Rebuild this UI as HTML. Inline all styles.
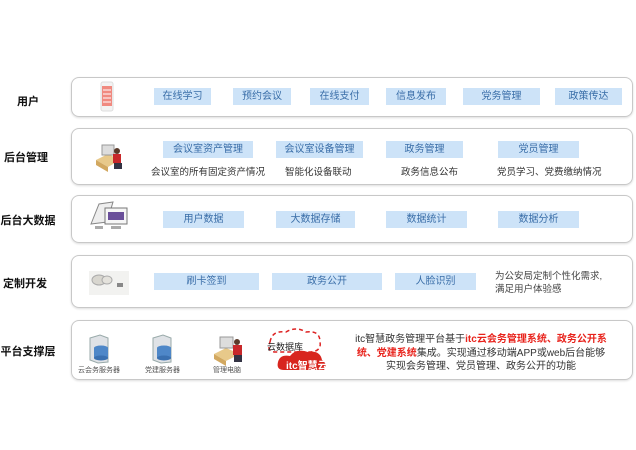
<!DOCTYPE html><html><head><meta charset="utf-8"><style>
*{margin:0;padding:0;box-sizing:border-box}
body{width:636px;height:450px;background:#fff;position:relative;overflow:hidden;font-family:"Liberation Sans","Noto Sans CJK SC",sans-serif;color:#333}
.p{position:absolute;left:71px;width:562px;border:1px solid #c8c8c8;border-radius:8px;box-shadow:0 1px 2px #ddd}
.l{position:absolute;left:0;width:60px;font-size:11px;font-weight:bold;color:#111;text-align:center}
.b{position:absolute;background:#cde3f8;color:#3a6ea8;font-size:10px;text-align:center;height:17px;line-height:17px}
.t{position:absolute;font-size:9.5px;color:#333;white-space:nowrap}
.a{position:absolute}
</style></head><body>
<div class="p" style="top:77px;height:40px"></div>
<div class="p" style="top:128px;height:57px"></div>
<div class="p" style="top:195px;height:48px"></div>
<div class="p" style="top:255px;height:53px"></div>
<div class="p" style="top:320px;height:60px"></div>

<div class="l" style="top:93px;left:-2px">用户</div>
<div class="l" style="top:149px;left:-4px">后台管理</div>
<div class="l" style="top:212px;left:-2px">后台大数据</div>
<div class="l" style="top:275px;left:-5px">定制开发</div>
<div class="l" style="top:343px;left:-2px">平台支撑层</div>

<svg class="a" style="left:100px;top:81px" width="14" height="31"><rect x="1" y="1" width="12" height="29" rx="2" fill="#f3f3f3" stroke="#ddd"/><rect x="2" y="5" width="10" height="20" fill="#f08a80"/><g stroke="#fff"><line x1="3" y1="9" x2="11" y2="9"/><line x1="3" y1="13" x2="11" y2="13"/><line x1="3" y1="17" x2="11" y2="17"/><line x1="3" y1="21" x2="11" y2="21"/></g></svg>
<div class="b" style="left:154px;top:88px;width:57px">在线学习</div>
<div class="b" style="left:233px;top:88px;width:58px">预约会议</div>
<div class="b" style="left:310px;top:88px;width:59px">在线支付</div>
<div class="b" style="left:386px;top:88px;width:60px">信息发布</div>
<div class="b" style="left:463px;top:88px;width:77px">党务管理</div>
<div class="b" style="left:555px;top:88px;width:67px">政策传达</div>

<svg class="a" style="left:94px;top:142px" width="32" height="31"><polygon points="2,18 14,12 26,18 14,25" fill="#e8c98a"/><polygon points="2,18 14,25 14,30 2,23" fill="#d2a860"/><rect x="8" y="3" width="12" height="10" fill="#ddd" stroke="#999"/><circle cx="23" cy="9" r="3" fill="#5a3a2a"/><rect x="19" y="12" width="8" height="9" fill="#c8282a"/><rect x="20" y="21" width="8" height="6" fill="#334"/></svg>
<div class="b" style="left:163px;top:141px;width:90px">会议室资产管理</div>
<div class="b" style="left:276px;top:141px;width:87px">会议室设备管理</div>
<div class="b" style="left:386px;top:141px;width:77px">政务管理</div>
<div class="b" style="left:498px;top:141px;width:81px">党员管理</div>
<div class="t" style="left:151px;top:164px">会议室的所有固定资产情况</div>
<div class="t" style="left:285px;top:164px">智能化设备联动</div>
<div class="t" style="left:401px;top:164px">政务信息公布</div>
<div class="t" style="left:497px;top:164px">党员学习、党费缴纳情况</div>

<svg class="a" style="left:89px;top:200px" width="40" height="32"><polygon points="2,24 10,4 24,2 18,22" fill="#eee" stroke="#888"/><rect x="16" y="8" width="22" height="16" fill="#f6f6f6" stroke="#777"/><rect x="19" y="12" width="16" height="8" fill="#6a4f9a"/><rect x="22" y="26" width="10" height="3" fill="#aaa"/><rect x="6" y="26" width="8" height="3" fill="#aaa"/></svg>
<div class="b" style="left:163px;top:211px;width:81px">用户数据</div>
<div class="b" style="left:276px;top:211px;width:79px">大数据存储</div>
<div class="b" style="left:386px;top:211px;width:81px">数据统计</div>
<div class="b" style="left:498px;top:211px;width:81px">数据分析</div>

<svg class="a" style="left:89px;top:271px" width="40" height="24"><rect width="40" height="24" fill="#f2f2f0"/><ellipse cx="10" cy="9" rx="7" ry="5" fill="#d8d6cf" stroke="#aaa"/><ellipse cx="18" cy="9" rx="5" ry="4" fill="#e4e2dc" stroke="#aaa"/><rect x="28" y="12" width="6" height="4" fill="#888"/></svg>
<div class="b" style="left:154px;top:273px;width:105px">刷卡签到</div>
<div class="b" style="left:272px;top:273px;width:110px">政务公开</div>
<div class="b" style="left:395px;top:273px;width:81px">人脸识别</div>
<div class="t" style="left:495px;top:270px;line-height:13px;color:#444">为公安局定制个性化需求,<br>满足用户体验感</div>

<svg class="a" style="left:88px;top:334px" width="22" height="30"><polygon points="2,4 12,1 20,4 20,28 10,29 2,26" fill="#dfe2e6" stroke="#9aa"/><ellipse cx="13" cy="14" rx="7" ry="2.5" fill="#4e87c8"/><rect x="6" y="14" width="14" height="10" fill="#4e87c8"/><ellipse cx="13" cy="24" rx="7" ry="2.5" fill="#3a70b0"/></svg>
<svg class="a" style="left:151px;top:334px" width="22" height="30"><polygon points="2,4 12,1 20,4 20,28 10,29 2,26" fill="#dfe2e6" stroke="#9aa"/><ellipse cx="13" cy="14" rx="7" ry="2.5" fill="#4e87c8"/><rect x="6" y="14" width="14" height="10" fill="#4e87c8"/><ellipse cx="13" cy="24" rx="7" ry="2.5" fill="#3a70b0"/></svg>
<svg class="a" style="left:212px;top:334px" width="34" height="32"><polygon points="2,20 14,14 28,20 14,27" fill="#e8c98a"/><polygon points="2,20 14,27 14,32 2,25" fill="#d2a860"/><rect x="8" y="3" width="13" height="11" fill="#ddd" stroke="#999"/><circle cx="25" cy="8" r="3" fill="#5a3a2a"/><rect x="21" y="11" width="9" height="10" fill="#c8282a"/><rect x="22" y="21" width="8" height="7" fill="#334"/></svg>
<div class="t" style="left:78px;top:365px;font-size:7px;color:#555">云会务服务器</div>
<div class="t" style="left:145px;top:365px;font-size:7px;color:#555">党建服务器</div>
<div class="t" style="left:213px;top:365px;font-size:7px;color:#555">管理电脑</div>
<svg class="a" style="left:262px;top:326px" width="72" height="48"><path d="M8,16 Q10,4 24,6 Q34,0 44,6 Q58,4 58,16 Q60,26 46,26 L14,26 Q4,26 8,16Z" fill="none" stroke="#d22" stroke-width="1.5" stroke-dasharray="4,3"/><path d="M22,44 Q14,44 16,36 Q18,28 28,30 Q34,22 46,26 Q58,24 60,34 Q66,38 62,44Z" fill="#d8251e"/></svg>
<div class="t" style="left:267px;top:340px;font-size:9px;color:#222">云数据库</div>
<div class="t" style="left:286px;top:357px;font-size:10px;color:#fff;font-weight:bold">itc智慧云</div>
<div class="t" style="left:340px;top:333px;width:282px;text-align:center;line-height:13.5px;font-size:10px;color:#333">itc智慧政务管理平台基于<b style="color:#e8231c">itc云会务管理系统、政务公开系</b><br><b style="color:#e8231c">统、党建系统</b>集成。实现通过移动端APP或web后台能够<br>实现会务管理、党员管理、政务公开的功能</div>
</body></html>
